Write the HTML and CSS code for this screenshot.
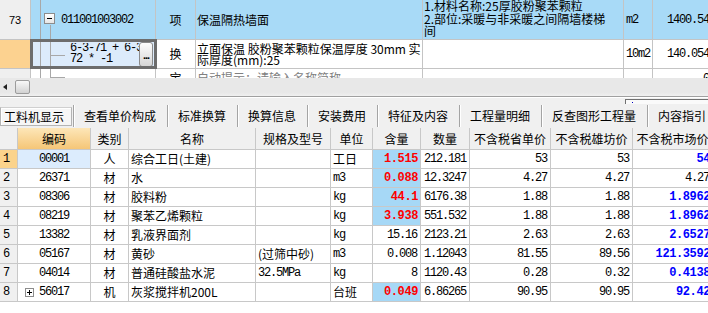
FILE: index.html
```html
<!DOCTYPE html>
<html lang="zh-CN">
<head>
  <meta charset="UTF-8">
  <title>工料机显示</title>
  <link rel="stylesheet" href="styles.css">
</head>
<body>
  <div class="qd">
    <div class="qd-row row-cur">
      <div class="c rn">73</div>
      <div class="c tree tree-root"><span class="toggle"></span><span class="mono">011001003002</span></div>
      <div class="c kind">项</div>
      <div class="c name">保温隔热墙面</div>
      <div class="c feat"><span>1.材料名称:25厚胶粉聚苯颗粒<br>2.部位:采暖与非采暖之间隔墙楼梯<br>间</span></div>
      <div class="c unit mono">m2</div>
      <div class="c qty mono">1400.54</div>
    </div>
    <div class="qd-row row-edit">
      <div class="c rn rn-sel"></div>
      <div class="c tree tree-child editing"><span class="code-edit mono">6-3-71 + 6-3-<br>72 * -1</span><span class="dots">...</span></div>
      <div class="c kind">换</div>
      <div class="c name two"><span>立面保温 胶粉聚苯颗粒保温厚度 30mm 实<br>际厚度(mm):25</span></div>
      <div class="c feat"></div>
      <div class="c unit mono">10m2</div>
      <div class="c qty mono">140.054</div>
    </div>
    <div class="qd-row row-new">
      <div class="c rn"></div>
      <div class="c tree tree-last"></div>
      <div class="c kind">宝</div>
      <div class="c name hint">自动提示：请输入名称简称</div>
      <div class="c feat"></div>
      <div class="c unit"></div>
      <div class="c qty mono">0</div>
    </div>
  </div>

  <div class="hscroll"><span class="arrow-l"></span><span class="thumb"></span></div>

  <div class="tabbar">
    <div class="tab-strip"><span class="mini"><i></i></span></div>
    <div class="tabs">
      <span class="tab active">工料机显示</span><i class="sep"></i>
      <span class="tab">查看单价构成</span><i class="sep"></i>
      <span class="tab">标准换算</span><i class="sep"></i>
      <span class="tab">换算信息</span><i class="sep"></i>
      <span class="tab">安装费用</span><i class="sep"></i>
      <span class="tab">特征及内容</span><i class="sep"></i>
      <span class="tab">工程量明细</span><i class="sep"></i>
      <span class="tab">反查图形工程量</span><i class="sep"></i>
      <span class="tab">内容指引</span>
    </div>
  </div>

  <div class="glj">
    <div class="h"></div>
    <div class="h h-sort">编码</div>
    <div class="h">类别</div>
    <div class="h">名称</div>
    <div class="h">规格及型号</div>
    <div class="h">单位</div>
    <div class="h">含量</div>
    <div class="h">数量</div>
    <div class="h">不含税省单价</div>
    <div class="h">不含税雄坊价</div>
    <div class="h">不含税市场价</div>

    <div class="g no no-sel mono">1</div>
    <div class="g code code-sel mono">00001</div>
    <div class="g cat">人</div>
    <div class="g txt">综合工日(土建)</div>
    <div class="g txt"></div>
    <div class="g txt">工日</div>
    <div class="g num hl mono">1.515</div>
    <div class="g amt mono">212.181</div>
    <div class="g num mono">53</div>
    <div class="g num mono">53</div>
    <div class="g num blue mono">54</div>

    <div class="g no mono">2</div>
    <div class="g code mono">26371</div>
    <div class="g cat">材</div>
    <div class="g txt">水</div>
    <div class="g txt"></div>
    <div class="g txt mono">m3</div>
    <div class="g num hl mono">0.088</div>
    <div class="g amt mono">12.3247</div>
    <div class="g num mono">4.27</div>
    <div class="g num mono">4.27</div>
    <div class="g num mono">4.27</div>

    <div class="g no mono">3</div>
    <div class="g code mono">08306</div>
    <div class="g cat">材</div>
    <div class="g txt">胶料粉</div>
    <div class="g txt"></div>
    <div class="g txt mono">kg</div>
    <div class="g num hl mono">44.1</div>
    <div class="g amt mono">6176.38</div>
    <div class="g num mono">1.88</div>
    <div class="g num mono">1.88</div>
    <div class="g num blue mono">1.8962</div>

    <div class="g no mono">4</div>
    <div class="g code mono">08219</div>
    <div class="g cat">材</div>
    <div class="g txt">聚苯乙烯颗粒</div>
    <div class="g txt"></div>
    <div class="g txt mono">kg</div>
    <div class="g num hl mono">3.938</div>
    <div class="g amt mono">551.532</div>
    <div class="g num mono">1.88</div>
    <div class="g num mono">1.88</div>
    <div class="g num blue mono">1.8962</div>

    <div class="g no mono">5</div>
    <div class="g code mono">13382</div>
    <div class="g cat">材</div>
    <div class="g txt">乳液界面剂</div>
    <div class="g txt"></div>
    <div class="g txt mono">kg</div>
    <div class="g num mono">15.16</div>
    <div class="g amt mono">2123.21</div>
    <div class="g num mono">2.63</div>
    <div class="g num mono">2.63</div>
    <div class="g num blue mono">2.6527</div>

    <div class="g no mono">6</div>
    <div class="g code mono">05167</div>
    <div class="g cat">材</div>
    <div class="g txt">黄砂</div>
    <div class="g txt">(过筛中砂)</div>
    <div class="g txt mono">m3</div>
    <div class="g num mono">0.008</div>
    <div class="g amt mono">1.12043</div>
    <div class="g num mono">81.55</div>
    <div class="g num mono">89.56</div>
    <div class="g num blue mono">121.3592</div>

    <div class="g no mono">7</div>
    <div class="g code mono">04014</div>
    <div class="g cat">材</div>
    <div class="g txt">普通硅酸盐水泥</div>
    <div class="g txt mono">32.5MPa</div>
    <div class="g txt mono">kg</div>
    <div class="g num mono">8</div>
    <div class="g amt mono">1120.43</div>
    <div class="g num mono">0.28</div>
    <div class="g num mono">0.32</div>
    <div class="g num blue mono">0.4138</div>

    <div class="g no mono">8</div>
    <div class="g code code-exp mono"><span class="plus"></span><span class="code-txt">56017</span></div>
    <div class="g cat">机</div>
    <div class="g txt">灰浆搅拌机200L</div>
    <div class="g txt"></div>
    <div class="g txt">台班</div>
    <div class="g num hl mono">0.049</div>
    <div class="g amt mono">6.86265</div>
    <div class="g num mono">90.95</div>
    <div class="g num mono">90.95</div>
    <div class="g num blue mono">92.42</div>
  </div>
</body>
</html>
```

FILE: styles.css
```css
body {
  margin: 0;
  width: 712px;
  height: 313px;
  overflow: hidden;
  background: #fff;
  color: #000;
  font-family: "Noto Sans CJK SC", sans-serif;
  font-size: 12px;
}
.mono {
  font-family: "Liberation Mono", "Noto Sans CJK SC", monospace;
  letter-spacing: -1.2px;
}

/* upper grid: bill items */
.qd {
  height: 78px;
  overflow: hidden;
}
.qd-row {
  display: flex;
  box-sizing: border-box;
  border-bottom: 1px solid #c4c4c4;
}
.row-cur { height: 40px; }
.row-edit { height: 29px; }
.row-new { height: 29px; }
.c {
  box-sizing: border-box;
  display: flex;
  align-items: center;
  flex-shrink: 0;
  border-right: 1px solid #c4c4c4;
  white-space: nowrap;
  overflow: hidden;
  line-height: 12px;
}
.row-cur .c { background: #a8daf7; }
.rn {
  width: 31px;
  justify-content: center;
  font-family: "Liberation Sans", sans-serif;
  font-size: 11px;
}
.row-cur .rn, .row-new .rn { background: #efefef; }
.rn-sel { background: #fcd290; }
.tree { width: 125px; }
.kind { width: 40px; justify-content: center; }
.name { width: 227px; padding-left: 1px; }
.feat {
  width: 201px;
  align-items: flex-start;
  padding-left: 1px;
  line-height: 12.5px;
}
.unit { width: 29px; padding-left: 2px; }
.qty {
  width: 60px;
  justify-content: flex-end;
  padding-right: 3px;
}
.row-new .c {
  align-items: flex-start;
  padding-top: 3px;
}
.row-new .qty { padding-top: 4px; }
.hint { color: #808080; }

.tree-root {
  background:
    linear-gradient(#a8a8a8, #a8a8a8) 9px 0 / 1px 100% no-repeat,
    linear-gradient(#a8a8a8, #a8a8a8) 19px 25px / 1px 15px no-repeat,
    #a8daf7 !important;
}
.toggle {
  box-sizing: border-box;
  flex-shrink: 0;
  width: 11px;
  height: 11px;
  margin: -2px 6px 0 13px;
  border: 1px solid #8c8c8c;
  background: linear-gradient(#000, #000) center / 5px 1px no-repeat, linear-gradient(#fff, #e6e6e6);
}
.tree-child {
  background:
    linear-gradient(#a8a8a8, #a8a8a8) 9px 0 / 1px 100% no-repeat,
    linear-gradient(#a8a8a8, #a8a8a8) 19px 0 / 1px 100% no-repeat,
    linear-gradient(#a8a8a8, #a8a8a8) 19px 15px / 15px 1px no-repeat,
    #dcebfb;
}
.tree-last {
  background:
    linear-gradient(#a8a8a8, #a8a8a8) 9px 0 / 1px 100% no-repeat,
    linear-gradient(#a8a8a8, #a8a8a8) 19px 0 / 1px 100% no-repeat,
    linear-gradient(#a8a8a8, #a8a8a8) 19px 8px / 15px 1px no-repeat;
}
.editing {
  outline: 3px solid #6d6d6d;
  outline-offset: -2px;
}
.code-edit {
  flex: 1;
  min-width: 0;
  overflow: hidden;
  padding-left: 39px;
  line-height: 11px;
}
.dots {
  box-sizing: border-box;
  flex-shrink: 0;
  width: 14px;
  height: 25px;
  margin-right: 2px;
  border: 1px solid #8a8a8a;
  border-radius: 3px;
  background: linear-gradient(#fdfdfd, #d6d6d6);
  font-family: "Liberation Sans", sans-serif;
  font-weight: bold;
  font-size: 11px;
  line-height: 24px;
  text-align: center;
  letter-spacing: -1px;
}
.name.two { line-height: 11.5px; }

/* horizontal scrollbar */
.hscroll {
  height: 18px;
  display: flex;
  align-items: center;
  background: linear-gradient(#e8e8e8 80%, #f0f0f0);
}
.arrow-l {
  width: 0;
  height: 0;
  margin: 0 0 0 3px;
  border-right: 4px solid #202020;
  border-top: 3px solid transparent;
  border-bottom: 3px solid transparent;
}
.thumb {
  box-sizing: border-box;
  width: 15px;
  height: 14px;
  margin-left: 8px;
  border: 1px solid #9c9c9c;
  border-radius: 2px;
  background: linear-gradient(#f8f8f8, #d2d2d2);
}

/* tab bar */
.tabbar {
  border-top: 1px solid #a0a0a0;
  box-shadow: inset 0 1px #fff;
  background: #f0f0f0;
}
.tab-strip {
  height: 7px;
  display: flex;
  justify-content: flex-end;
}
.mini {
  box-sizing: border-box;
  flex-shrink: 0;
  width: 87px;
  height: 5px;
  margin-top: 2px;
  border-top: 1px solid #707070;
  border-left: 1px solid #707070;
  background: #fafafa;
  display: flex;
}
.mini i {
  width: 1px;
  height: 1px;
  margin: 2px 0 0 6px;
  background: #0000c0;
}
.tabs {
  height: 24px;
  display: flex;
  align-items: center;
  white-space: nowrap;
}
.tab {
  flex-shrink: 0;
  padding: 0 11px 0 10px;
  line-height: 18px;
}
.tab.active {
  box-sizing: border-box;
  width: 72px;
  height: 19px;
  margin-right: 1px;
  padding: 0 0 0 3px;
  border: 1px solid #b4b4b4;
  border-top-color: #d0d0d0;
  box-shadow: inset 1px 1px #fff;
  background: #f6f6f6;
  line-height: 17px;
}
.sep {
  flex-shrink: 0;
  width: 1px;
  height: 22px;
  background: #a4a4a4;
  box-shadow: 1px 0 #fff;
}

/* lower grid: labour, material, machine */
.glj {
  display: grid;
  grid-template-columns: 18px 73px 38px 127px 75px 42px 48px 49px 81px 82px 80px;
  grid-auto-rows: 19px;
  grid-template-rows: 22px;
}
.h, .g {
  box-sizing: border-box;
  border-right: 1px solid #c8c8c8;
  border-bottom: 1px solid #c8c8c8;
  white-space: nowrap;
  overflow: hidden;
}
.h {
  background: #f0f0f0;
  text-align: center;
  line-height: 21px;
}
.h-sort { background: linear-gradient(#fde6b8, #f5c677); }
.g { line-height: 18px; }
.no {
  background: #f0f0f0;
  padding-left: 3px;
}
.no-sel { background: #fbd38c; }
.code { text-align: center; }
.code-sel { background: #dcecfd; }
.code-exp {
  display: flex;
  align-items: center;
  padding: 0 16px 0 7px;
}
.code-txt { flex: 1; text-align: center; }
.plus {
  box-sizing: border-box;
  width: 9px;
  height: 9px;
  border: 1px solid #8c8c8c;
  background:
    linear-gradient(#000, #000) center / 1px 5px no-repeat,
    linear-gradient(#000, #000) center / 5px 1px no-repeat,
    #fff;
}
.cat { text-align: center; }
.txt { padding-left: 2px; }
.num {
  text-align: right;
  padding-right: 3px;
}
.amt { padding-left: 3px; }
.hl {
  background: #a6d8f6;
  color: #ff0000;
  font-weight: bold;
  letter-spacing: -0.4px;
  padding-right: 2px;
}
.blue {
  color: #0000ff;
  font-weight: bold;
  letter-spacing: -0.4px;
  padding-right: 2px;
}
```
